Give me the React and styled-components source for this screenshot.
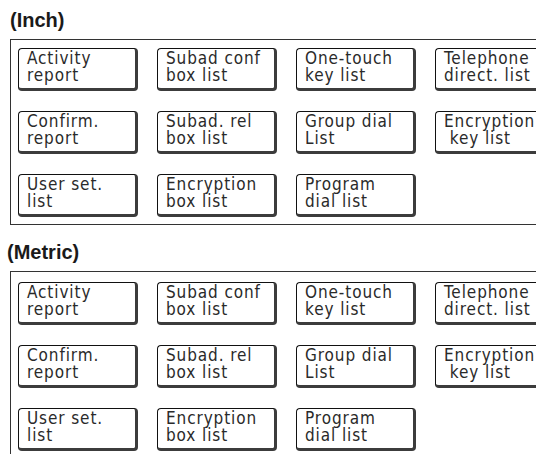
import React from 'react';
import styled, { createGlobalStyle } from 'styled-components';

const GlobalStyle = createGlobalStyle`
  html, body {
    margin: 0;
    padding: 0;
    background: #fff;
    overflow: hidden;
  }
  body {
    font-family: "Liberation Sans", Arial, sans-serif;
    color: #111;
  }
`

const Page = styled.main`
  display: flex;
  flex-direction: column;
  width: 600px;
  padding-top: 9px;
`

const Section = styled.section`
  display: flex;
  flex-direction: column;
  margin-bottom: ${props => props.gap || 0}px;
`

const Title = styled.h2`
  margin: 0 0 8px ${props => props.indent || 9}px;
  font-size: 20px;
  line-height: 22px;
  font-weight: 700;
  color: #1a1a1a;
`

const Panel = styled.div`
  margin-left: 10px;
  border: 1px solid #333;
  padding: ${props => props.top || 8}px 8px 7px 7px;
  display: grid;
  grid-template-columns: repeat(4, 120px);
  column-gap: 19px;
  row-gap: 20px;
`

const KeyButton = styled.div`
  box-sizing: border-box;
  height: 43px;
  border: 1px solid #111;
  border-right: 3px solid #3c3c3c;
  border-bottom: 3px solid #3c3c3c;
  border-radius: 4px;
  padding: 1px 0 0 8px;
  font-family: "DejaVu Sans Condensed", "DejaVu Sans", sans-serif;
  font-stretch: condensed;
  font-size: 17px;
  line-height: 17px;
  letter-spacing: 0.9px;
  color: #2a2a2a;
  white-space: pre;
  overflow: visible;
`

const keys = [
  ['Activity', 'report'],
  ['Subad conf', 'box list'],
  ['One-touch', 'key list'],
  ['Telephone', 'direct. list'],
  ['Confirm.', 'report'],
  ['Subad. rel', 'box list'],
  ['Group dial', 'List'],
  ['Encryption', ' key list'],
  ['User set.', 'list'],
  ['Encryption', 'box list'],
  ['Program', 'dial list'],
]

function KeyPanel({ top }) {
  return (
    <Panel top={top}>
      {keys.map((k, i) => (
        <KeyButton key={i}>
          {k[0]}
          <br />
          {k[1]}
        </KeyButton>
      ))}
    </Panel>
  )
}

export default function App() {
  return (
    <>
      <GlobalStyle />
      <Page>
        <Section gap={16}>
          <Title indent={10}>(Inch)</Title>
          <KeyPanel top={8} />
        </Section>
        <Section>
          <Title indent={7}>(Metric)</Title>
          <KeyPanel top={10} />
        </Section>
      </Page>
    </>
  )
}
